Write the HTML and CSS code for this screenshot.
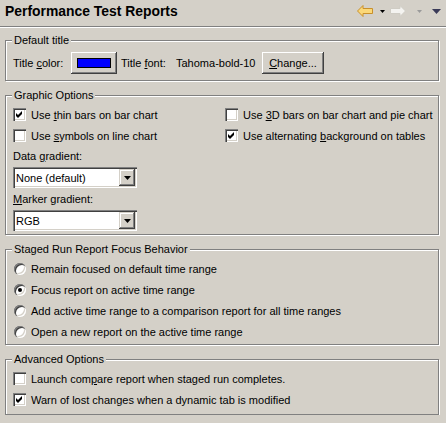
FILE: index.html
```html
<!DOCTYPE html>
<html lang="en">
<head>
  <meta charset="UTF-8">
  <meta name="viewport" content="width=device-width, initial-scale=1.0">
  <title>Performance Test Reports</title>
  <link rel="stylesheet" href="styles.css">
</head>
<body>
  <header class="title-bar">
    <h1>Performance Test Reports</h1>
    <div class="toolbar">
      <svg class="nav-arrow" width="16" height="12" viewBox="0 0 16 12">
        <polygon points="0.5,6 6,0.5 6,3.5 15.5,3.5 15.5,8.5 6,8.5 6,11.5" fill="#fbd878" stroke="#c8902c" stroke-width="1"/>
      </svg>
      <svg class="caret" width="5" height="3" viewBox="0 0 5 3"><polygon points="0,0 5,0 2.5,3" fill="#000"/></svg>
      <svg class="nav-arrow fwd" width="16" height="12" viewBox="0 0 16 12">
        <polygon points="15.5,6 10,0.5 10,3.5 0.5,3.5 0.5,8.5 10,8.5 10,11.5" fill="#f4f3f0" stroke="#cfccc4" stroke-width="1"/>
      </svg>
      <svg class="caret gray" width="5" height="3" viewBox="0 0 5 3"><polygon points="0,0 5,0 2.5,3" fill="#9a9a9a"/></svg>
      <svg class="view-menu" width="9" height="5" viewBox="0 0 9 5"><polygon points="0,0 9,0 4.5,5" fill="#3a3a58"/></svg>
    </div>
  </header>

  <main class="page">
    <fieldset class="group group-title">
      <legend>Default title</legend>
      <div class="title-row">
        <span class="lbl-color">Title <u>c</u>olor:</span>
        <button class="btn color-btn"><span class="swatch"></span></button>
        <span class="lbl-font">Title <u>f</u>ont:</span>
        <span class="font-name">Tahoma-bold-10</span>
        <button class="btn change-btn"><u>C</u>hange...</button>
      </div>
    </fieldset>

    <fieldset class="group group-graphic">
      <legend>Graphic Options</legend>
      <div class="check-grid">
        <label class="check"><span class="box on"><svg width="13" height="13" viewBox="0 0 13 13"><polygon points="3,5 5,7 9,3 9,6 5,10 3,8" fill="#000"/></svg></span><span>Use <u>t</u>hin bars on bar chart</span></label>
        <label class="check"><span class="box"></span><span>Use <u>3</u>D bars on bar chart and pie chart</span></label>
        <label class="check"><span class="box"></span><span>Use <u>s</u>ymbols on line chart</span></label>
        <label class="check"><span class="box on"><svg width="13" height="13" viewBox="0 0 13 13"><polygon points="3,5 5,7 9,3 9,6 5,10 3,8" fill="#000"/></svg></span><span>Use alternating <u>b</u>ackground on tables</span></label>
      </div>
      <div class="field-label">Data <u>g</u>radient:</div>
      <div class="select">
        <span class="select-text">None (default)</span>
        <span class="select-btn"><svg width="7" height="4" viewBox="0 0 7 4"><polygon points="0,0 7,0 3.5,4" fill="#000"/></svg></span>
      </div>
      <div class="field-label"><u>M</u>arker gradient:</div>
      <div class="select">
        <span class="select-text">RGB</span>
        <span class="select-btn"><svg width="7" height="4" viewBox="0 0 7 4"><polygon points="0,0 7,0 3.5,4" fill="#000"/></svg></span>
      </div>
    </fieldset>

    <fieldset class="group group-staged">
      <legend>Staged Run Report Focus Behavior</legend>
      <label class="radio-row"><span class="radio"></span><span>Remain focused on default time range</span></label>
      <label class="radio-row"><span class="radio on"></span><span>Focus report on active time range</span></label>
      <label class="radio-row"><span class="radio"></span><span>Add active time range to a comparison report for all time ranges</span></label>
      <label class="radio-row"><span class="radio"></span><span>Open a new report on the active time range</span></label>
    </fieldset>

    <fieldset class="group group-advanced">
      <legend>Advanced Options</legend>
      <label class="check"><span class="box"></span><span>Launch com<u>p</u>are report when staged run completes.</span></label>
      <label class="check"><span class="box on"><svg width="13" height="13" viewBox="0 0 13 13"><polygon points="3,5 5,7 9,3 9,6 5,10 3,8" fill="#000"/></svg></span><span>Warn of lost changes when a dynamic tab is modified</span></label>
    </fieldset>
  </main>
</body>
</html>
```

FILE: styles.css
```css
body {
  margin: 0;
  background-color: #d4d0c8;
  font-family: "Liberation Sans", Arial, sans-serif;
  font-size: 11px;
  color: #000;
}
u {
  text-decoration: underline;
}

/* header */
.title-bar {
  display: flex;
  align-items: flex-start;
  height: 26px;
  padding: 0 5px 0 5px;
  border-bottom: 1px solid #808080;
  box-shadow: 0 1px 0 #fff;
}
.title-bar h1 {
  margin: 0;
  padding-top: 3px;
  font-size: 13.9px;
  line-height: 16px;
  font-weight: bold;
}
.toolbar {
  margin-left: auto;
  display: flex;
  align-items: center;
  padding-top: 5px;
}
.toolbar svg {
  display: block;
}
.nav-arrow {
  margin-right: 7px;
}
.caret {
  margin-right: 5px;
}
.caret.gray {
  margin-right: 10px;
}
.fwd {
  margin-right: 11px;
}

/* groups */
.page {
  display: flex;
  flex-direction: column;
  gap: 8px;
  padding: 7px 7px 0 5px;
}
.group {
  margin: 0;
  min-width: 0;
  padding: 2px 7px 2px 7px;
  border: 1px solid #808080;
  box-shadow: 1px 1px 0 #fff, inset 1px 1px 0 #fff;
}
.group legend {
  padding: 0 2px;
  margin-left: -1px;
  line-height: 13px;
  background-color: #d4d0c8;
}
.group-title {
  padding-top: 5px;
  padding-bottom: 6px;
}
.group-graphic {
  padding-bottom: 3px;
}
.group-advanced {
  padding-bottom: 4px;
}

/* title row */
.title-row {
  display: flex;
  align-items: center;
  height: 22px;
}
.lbl-color {
  width: 58px;
}
.lbl-font {
  width: 55px;
  margin-left: 4px;
}
.font-name {
  width: 86px;
}
.btn {
  height: 22px;
  padding: 0;
  border: none;
  background-color: #d4d0c8;
  font: inherit;
  color: #000;
  box-shadow: inset -1px -1px 0 #404040, inset 1px 1px 0 #fff, inset -2px -2px 0 #808080, inset 2px 2px 0 #d4d0c8;
}
.color-btn {
  width: 46px;
  display: flex;
  align-items: center;
  justify-content: center;
}
.swatch {
  display: block;
  width: 32px;
  height: 8px;
  background-color: #0000ff;
  border: 1px solid #000;
}
.change-btn {
  width: 62px;
}

/* checkboxes */
.check-grid {
  display: grid;
  grid-template-columns: 212px 1fr;
}
.check {
  display: flex;
  align-items: center;
  gap: 5px;
  height: 21px;
  white-space: nowrap;
}
.box {
  flex: none;
  width: 13px;
  height: 13px;
  background-color: #fff;
  box-shadow: inset 1px 1px 0 #808080, inset 2px 2px 0 #404040, inset -1px -1px 0 #fff, inset -2px -2px 0 #d4d0c8;
}
.box svg {
  display: block;
}

/* dropdowns */
.field-label {
  height: 14px;
  line-height: 14px;
  margin-top: 3px;
}
.select {
  display: flex;
  align-items: center;
  box-sizing: border-box;
  width: 124px;
  height: 21px;
  margin-top: 4px;
  padding-left: 3px;
  background-color: #fff;
  box-shadow: inset 1px 1px 0 #808080, inset 2px 2px 0 #404040, inset -1px -1px 0 #fff, inset -2px -2px 0 #d4d0c8;
}
.select + .field-label {
  margin-top: 4px;
}
.select-text {
  flex: 1;
}
.select-btn {
  display: flex;
  align-items: center;
  justify-content: center;
  width: 16px;
  height: 17px;
  margin-right: 2px;
  background-color: #d4d0c8;
  box-shadow: inset -1px -1px 0 #404040, inset 1px 1px 0 #d4d0c8, inset -2px -2px 0 #808080, inset 2px 2px 0 #fff;
}

/* radios */
.radio-row {
  display: flex;
  align-items: center;
  gap: 5px;
  height: 21px;
  padding-left: 1px;
}
.radio {
  flex: none;
  width: 12px;
  height: 12px;
  border-radius: 50%;
  background-color: #fff;
  box-shadow: inset 1px 1px 0 #808080, inset 2px 2px 0 #404040, inset -1px -1px 0 #fff, inset -2px -2px 0 #d4d0c8;
  display: flex;
  align-items: center;
  justify-content: center;
}
.radio.on::after {
  content: "";
  width: 4px;
  height: 4px;
  border-radius: 50%;
  background-color: #000;
}
```
